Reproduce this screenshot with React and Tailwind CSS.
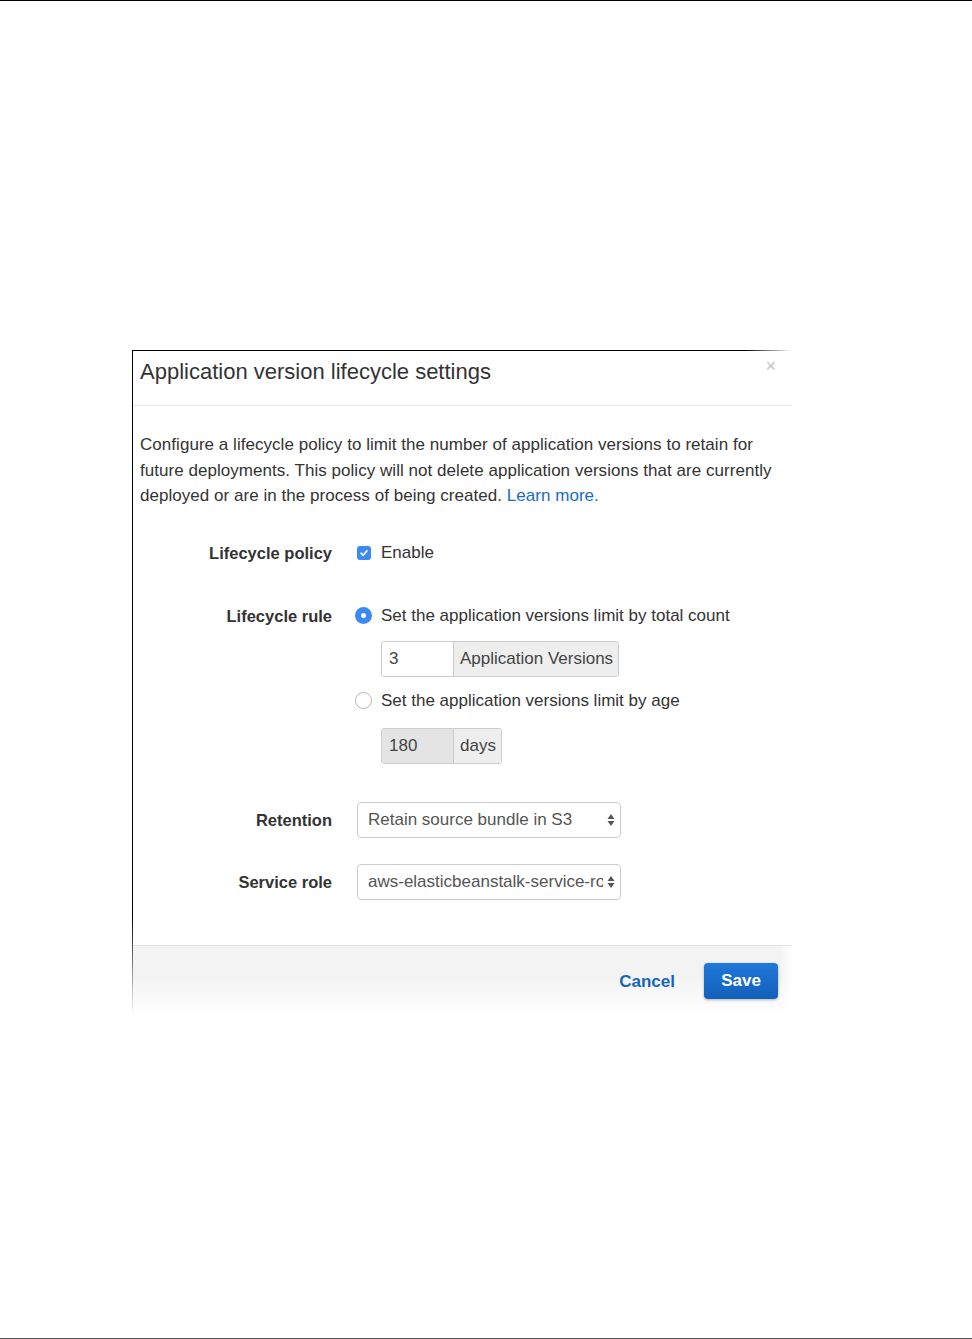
import React from "react";

function Arrows() {
  return (
    <svg width="8" height="14" viewBox="0 0 8 14" className="shrink-0">
      <path d="M4 1 L7.5 6 H0.5 Z" fill="#555" />
      <path d="M4 13 L7.5 8 H0.5 Z" fill="#555" />
    </svg>
  );
}

function Label({ children }) {
  return (
    <div className="w-[199px] shrink-0 text-right font-bold text-[16.5px] text-[#333] leading-[22px]">
      {children}
    </div>
  );
}

export default function App() {
  return (
    <div
      className="h-[1339px] w-[972px] bg-white border-t border-black border-b border-b-[#555] pt-[349px] pl-[132px]"
      style={{ fontFamily: '"Liberation Sans", Arial, sans-serif' }}
    >
      <div className="relative w-[660px] flex">
        {/* left border fading at bottom */}
        <div className="w-px shrink-0 self-stretch bg-[linear-gradient(to_bottom,#000_0%,#000_85%,transparent_100%)]" />
        <div className="flex-1 flex flex-col">
          {/* top border fading at right */}
          <div className="h-px bg-[linear-gradient(to_right,#000_0%,#000_93%,transparent_100%)]" />
          {/* header */}
          <div className="relative h-[55px] flex items-center pl-[7px] pb-[13px] border-b border-[#ececec]">
            <span className="text-[22px] text-[#333] leading-none">
              Application version lifecycle settings
            </span>
            <span className="absolute right-[16px] top-[6px] text-[18px] leading-none text-[#c4c4c4]">
              ×
            </span>
          </div>
          {/* body */}
          <div className="flex flex-col pl-[7px] pt-[26px] pb-[45px] pr-[10px]">
            <p className="text-[17px] leading-[25.5px] text-[#333] tracking-[0.04px]">
              Configure a lifecycle policy to limit the number of application versions to retain for
              future deployments. This policy will not delete application versions that are currently
              deployed or are in the process of being created. <span className="text-[#1a6bc4]">Learn more.</span>
            </p>

            {/* Lifecycle policy */}
            <div className="flex items-center mt-[33px] -ml-[7px]">
              <Label>Lifecycle policy</Label>
              <div className="ml-[25px] flex items-center">
                <div className="w-[14px] h-[14px] rounded-[3px] bg-[#3b8af2] flex items-center justify-center">
                  <svg width="10" height="10" viewBox="0 0 10 10">
                    <path d="M2 5.2 L4.2 7.3 L8 2.8" stroke="#fff" strokeWidth="1.6" fill="none" strokeLinecap="round" strokeLinejoin="round" />
                  </svg>
                </div>
                <span className="ml-[10px] text-[17px] text-[#333] leading-[22px]">Enable</span>
              </div>
            </div>

            {/* Lifecycle rule */}
            <div className="flex mt-[41px] -ml-[7px]">
              <Label>Lifecycle rule</Label>
              <div className="ml-[23px] flex flex-col">
                <div className="flex items-center h-[22px]">
                  <div className="w-[17px] h-[17px] rounded-full bg-[#3b8af2] flex items-center justify-center">
                    <div className="w-[5px] h-[5px] rounded-full bg-white" />
                  </div>
                  <span className="ml-[9px] text-[17px] text-[#333]">
                    Set the application versions limit by total count
                  </span>
                </div>
                <div className="mt-[14px] ml-[26px] flex h-[36px] w-[238px] border border-[#ccc] rounded-[3px] overflow-hidden text-[17px] text-[#444]">
                  <div className="w-[71px] shrink-0 bg-white pl-[7px] flex items-center">3</div>
                  <div className="flex-1 bg-[#eee] border-l border-[#ccc] pl-[6px] flex items-center whitespace-nowrap">
                    Application Versions
                  </div>
                </div>
                <div className="flex items-center h-[22px] mt-[13px]">
                  <div className="w-[17px] h-[17px] rounded-full border border-[#b5b5b5] bg-white" />
                  <span className="ml-[9px] text-[17px] text-[#333]">
                    Set the application versions limit by age
                  </span>
                </div>
                <div className="mt-[16px] ml-[26px] flex h-[36px] w-[121px] border border-[#ccc] rounded-[3px] overflow-hidden text-[17px] text-[#444]">
                  <div className="w-[71px] shrink-0 bg-[#e4e4e4] pl-[7px] flex items-center">180</div>
                  <div className="flex-1 bg-[#eee] border-l border-[#ccc] pl-[6px] flex items-center">
                    days
                  </div>
                </div>
              </div>
            </div>

            {/* Retention */}
            <div className="flex items-center mt-[38px] -ml-[7px]">
              <Label>Retention</Label>
              <div className="ml-[25px] w-[264px] h-[36px] border border-[#ccc] rounded-[4px] bg-white flex items-center pl-[10px] pr-[5px] text-[17px] text-[#555]">
                <span className="flex-1 whitespace-nowrap overflow-hidden mr-[4px]">Retain source bundle in S3</span>
                <Arrows />
              </div>
            </div>

            {/* Service role */}
            <div className="flex items-center mt-[26px] -ml-[7px]">
              <Label>Service role</Label>
              <div className="ml-[25px] w-[264px] h-[36px] border border-[#ccc] rounded-[4px] bg-white flex items-center pl-[10px] pr-[5px] text-[17px] text-[#555]">
                <span className="flex-1 whitespace-nowrap overflow-hidden mr-[4px]">aws-elasticbeanstalk-service-role</span>
                <Arrows />
              </div>
            </div>
          </div>

          {/* footer */}
          <div className="relative h-[70px] border-t border-[#e2e2e2] bg-[linear-gradient(to_bottom,#f3f3f3_0%,#f3f3f3_45%,#ffffff_100%)] flex justify-end items-start pt-[17px] pr-[14px]">
            <span className="mt-[9px] text-[17px] font-bold text-[#1466c0] leading-[20px]">Cancel</span>
            <div className="ml-[29px] w-[74px] h-[36px] rounded-[4px] bg-[linear-gradient(to_bottom,#1f78da,#135fba)] shadow-[0_1px_3px_rgba(0,0,0,0.3)] flex items-center justify-center text-white font-bold text-[17px]">
              Save
            </div>
            <div className="absolute right-0 top-0 bottom-0 w-[12px] bg-[linear-gradient(to_right,rgba(255,255,255,0),#fff)]" />
          </div>
        </div>
      </div>
    </div>
  );
}
